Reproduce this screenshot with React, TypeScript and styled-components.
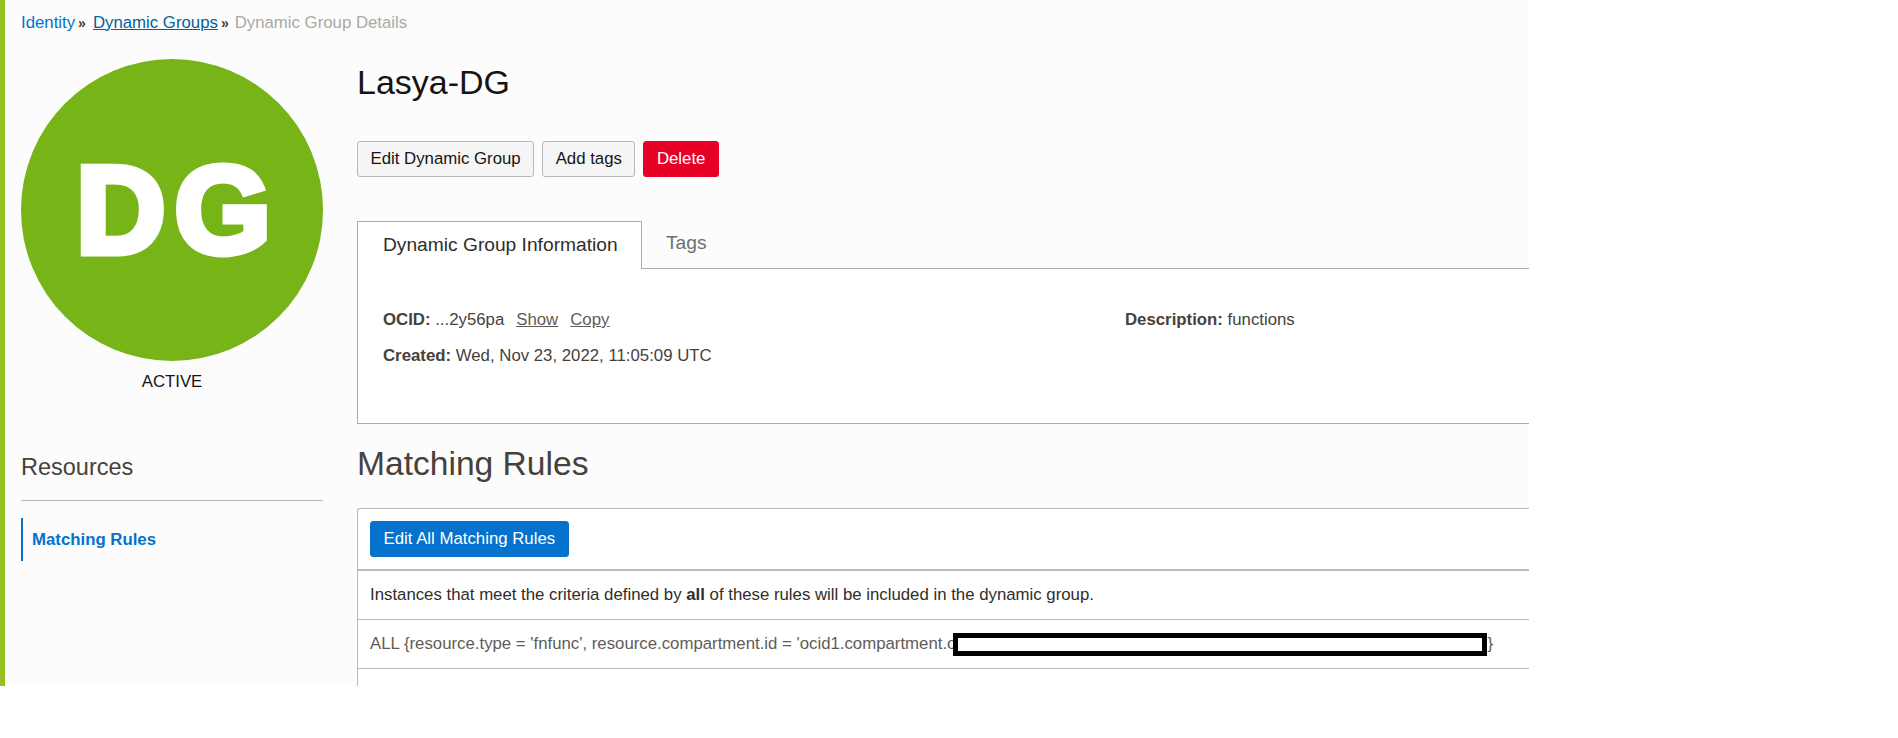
import React from "react";
import styled, { createGlobalStyle } from "styled-components";

const Global = createGlobalStyle`
  html, body { margin: 0; padding: 0; background: #fff; }
  body { font-family: "Liberation Sans", Arial, sans-serif; font-size: 16.8px; color: #161513; }
`;

const Page = styled.div`
  width: 1529px;
  height: 686px;
  box-sizing: border-box;
  background: #fcfcfc;
  border-left: 5px solid #94c11f;
  overflow: hidden;
`;

const Crumbs = styled.nav`
  display: flex;
  align-items: center;
  height: 45px;
  padding: 0 0 0 16px;
  margin-bottom: 14px;
  font-size: 16.8px;
  color: #aaa9a6;
`;

const CrumbLink = styled.a<{ $underline?: boolean }>`
  color: ${(p) => (p.$underline ? "#04609f" : "#0572ce")};
  text-decoration: ${(p) => (p.$underline ? "underline" : "none")};
`;

const CrumbSep = styled.span<{ $wide?: boolean }>`
  color: #46413b;
  font-size: 14px;
  font-weight: 700;
  margin: 0 ${(p) => (p.$wide ? 7 : 6)}px 0 3px;
`;

const Columns = styled.div`
  display: flex;
  align-items: flex-start;
`;

const Side = styled.aside`
  flex: 0 0 302px;
  margin: 0 34px 0 16px;
`;

const Badge = styled.div`
  box-sizing: border-box;
  width: 302px;
  height: 302px;
  padding-left: 12px;
  border-radius: 50%;
  background: #76b418;
  color: #fff;
  display: flex;
  align-items: center;
  justify-content: center;
  font-size: 124px;
  font-weight: 700;
  line-height: 1;
  letter-spacing: 9px;
  -webkit-text-stroke: 7px #fff;
`;

const Status = styled.div`
  margin-top: 11px;
  height: 20px;
  line-height: 20px;
  text-align: center;
  font-size: 16.8px;
  color: #161513;
`;

const SideTitle = styled.h2`
  margin: 59px 0 0;
  padding-bottom: 16px;
  height: 33px;
  line-height: 33px;
  font-size: 23.5px;
  font-weight: 400;
  color: #46413b;
  border-bottom: 1px solid #b5b9c2;
`;

const SideItem = styled.a`
  display: block;
  margin-top: 17px;
  height: 43px;
  line-height: 43px;
  padding-left: 9px;
  border-left: 2px solid #0572ce;
  font-size: 16.8px;
  font-weight: 700;
  color: #0572ce;
`;

const Main = styled.main`
  flex: 1;
  min-width: 0;
  overflow: hidden;
`;

const Title = styled.h1`
  margin: 0;
  height: 46px;
  line-height: 46px;
  font-size: 34px;
  font-weight: 400;
  color: #161513;
`;

const Actions = styled.div`
  display: flex;
  gap: 8px;
  margin-top: 36px;
`;

const Button = styled.button<{ $kind?: "default" | "danger" | "primary" }>`
  height: 36px;
  box-sizing: border-box;
  padding: 0 12.5px;
  font: 16.8px "Liberation Sans", Arial, sans-serif;
  border-radius: 3px;
  border: 1px solid
    ${(p) => (p.$kind === "danger" ? "#e60026" : p.$kind === "primary" ? "#0572ce" : "#b5b9c2")};
  background: ${(p) => (p.$kind === "danger" ? "#e60026" : p.$kind === "primary" ? "#0572ce" : "#f5f5f6")};
  color: ${(p) => (p.$kind === "danger" || p.$kind === "primary" ? "#fff" : "#161513")};
`;

const Tabs = styled.div`
  display: flex;
  margin-top: 44px;
  height: 47px;
  border-bottom: 1px solid #aaabaf;
`;

const ActiveTab = styled.div`
  box-sizing: border-box;
  width: 285px;
  height: 48px;
  padding-left: 25px;
  line-height: 46px;
  font-size: 19.2px;
  background: #fff;
  color: #312d2a;
  border: 1px solid #aaabaf;
  border-bottom: none;
`;

const Tab = styled.div`
  padding-left: 24px;
  line-height: 44px;
  font-size: 19.2px;
  color: #6f6f73;
`;

const InfoPanel = styled.section`
  box-sizing: border-box;
  height: 155px;
  background: #fff;
  border-left: 1px solid #aaabaf;
  border-bottom: 1px solid #aaabaf;
  padding: 33px 0 0 25px;
  display: grid;
  grid-template-columns: 742px 1fr;
  grid-auto-rows: 36px;
  font-size: 16.8px;
  color: #46413b;
  align-items: center;
`;

const Label = styled.b`
  font-weight: 700;
`;

const InfoLink = styled.a`
  text-decoration: underline;
  color: #5f5c57;
  margin-left: 12px;
`;

const Heading = styled.h2`
  margin: 0;
  height: 84px;
  line-height: 80px;
  font-size: 33.6px;
  font-weight: 400;
  color: #46413b;
`;

const Table = styled.section`
  background: #fff;
  height: 178px;
  border: 1px solid #b5b9c2;
  border-right: none;
  border-bottom: none;
  border-top-left-radius: 3px;
`;

const TableBar = styled.div`
  height: 62px;
  padding-top: 12px;
  padding-left: 12px;
  box-sizing: border-box;
  border-bottom: 2px solid #b5b9c2;
`;

const Row = styled.div<{ $muted?: boolean }>`
  box-sizing: border-box;
  display: flex;
  align-items: center;
  height: 49px;
  padding-left: 12px;
  font-size: 16.8px;
  color: ${(p) => (p.$muted ? "#5f5c57" : "#312d2a")};
  border-bottom: 1px solid #b5b9c2;
  white-space: pre;
`;

const Redaction = styled.span`
  box-sizing: border-box;
  display: inline-block;
  flex: 0 0 534px;
  width: 534px;
  height: 23px;
  margin-left: -3px;
  background: #fff;
  border: 5px solid #000;
`;

export default function App() {
  return (
    <>
      <Global />
      <Page>
        <Crumbs>
          <CrumbLink>Identity</CrumbLink>
          <CrumbSep $wide>»</CrumbSep>
          <CrumbLink $underline>Dynamic Groups</CrumbLink>
          <CrumbSep>»</CrumbSep>
          <span>Dynamic Group Details</span>
        </Crumbs>
        <Columns>
          <Side>
            <Badge>DG</Badge>
            <Status>ACTIVE</Status>
            <SideTitle>Resources</SideTitle>
            <SideItem>Matching Rules</SideItem>
          </Side>
          <Main>
            <Title>Lasya-DG</Title>
            <Actions>
              <Button>Edit Dynamic Group</Button>
              <Button>Add tags</Button>
              <Button $kind="danger">Delete</Button>
            </Actions>
            <Tabs>
              <ActiveTab>Dynamic Group Information</ActiveTab>
              <Tab>Tags</Tab>
            </Tabs>
            <InfoPanel>
              <div>
                <Label>OCID:</Label> ...2y56pa<InfoLink>Show</InfoLink>
                <InfoLink>Copy</InfoLink>
              </div>
              <div>
                <Label>Description:</Label> functions
              </div>
              <div>
                <Label>Created:</Label> Wed, Nov 23, 2022, 11:05:09 UTC
              </div>
            </InfoPanel>
            <Heading>Matching Rules</Heading>
            <Table>
              <TableBar>
                <Button $kind="primary">Edit All Matching Rules</Button>
              </TableBar>
              <Row>
                Instances that meet the criteria defined by <b>all</b> of these rules will be included in the dynamic group.
              </Row>
              <Row $muted>
                ALL {"{"}resource.type = 'fnfunc', resource.compartment.id = 'ocid1.compartment.o
                <Redaction />
                {"}"}
              </Row>
            </Table>
          </Main>
        </Columns>
      </Page>
    </>
  );
}
